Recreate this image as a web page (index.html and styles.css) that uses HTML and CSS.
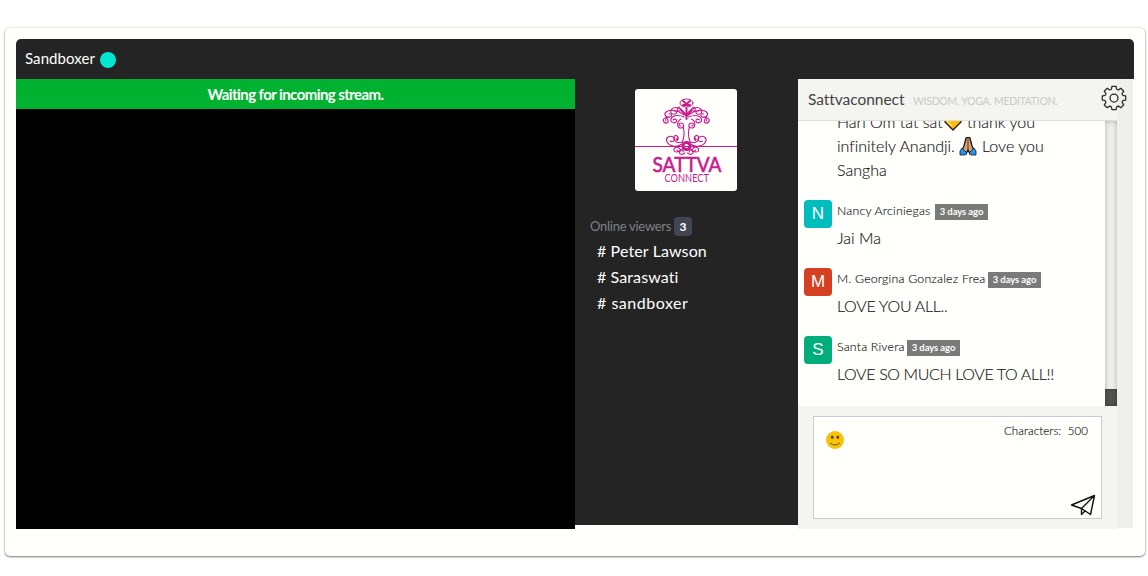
FILE: index.html
```html
<!DOCTYPE html>
<html lang="en">
<head>
<meta charset="utf-8">
<title>Sattva Connect</title>
<link rel="stylesheet" href="styles.css">
</head>
<body>
<main class="card">
  <header class="topbar"><span class="user">Sandboxer</span><i class="status"></i></header>
  <div class="columns">
    <section class="video"><div class="notice"><span>Waiting for incoming stream.</span></div></section>
    <aside class="viewers">
      <svg class="logo" viewBox="0 0 102 102">
        <rect width="102" height="102" rx="3" fill="#fffffc"/>
        <g fill="none" stroke="#c91b91" stroke-linecap="round">
          <path d="M0 57.500H102" stroke-width="1.200"/>
          <g id="half" stroke-width="1.100">
            <path d="M50 24C46 19 40 17 37 20S37 26 40 25S41 21 39 22"/>
            <path d="M49 26C43 21 34 20 31 23S32 29 35 28S36 24 34 25"/>
            <path d="M49 28C42 25 37 27 36 30S39 35 41 33S40 29 38 31"/>
            <path d="M34 28C29 28 27 31 29 33S34 34 33 31S30 30 31 32"/>
            <path d="M46 30C41 33 42 39 46 39S49 34 46 34S44 37 46 37"/>
            <path d="M45 18C42 18 41 22 44 22S47 19 45 20"/>
            <path d="M48 38C50 43 49 49 47 54"/>
            <path d="M47 55C42 59 34 57 32 53S34 46 38 48S38 54 35 52"/>
            <path d="M47 53C41 55 38 51 39 48S44 47 43 50S41 51 42 49"/>
            <path d="M48 59C44 64 39 64 39 61S43 57 45 60S42 63 42 61"/>
            <path d="M50 64C46 67 43 64 45 62S49 61 48 63"/>
          </g>
          <use href="#half" transform="translate(102.500) scale(-1 1)"/>
          <circle cx="51.500" cy="57" r="3.500" stroke-width="3" stroke-dasharray="1.500 .6"/>
          <path d="M51.500 19V30M47 22L51.500 27L56 22" stroke-width="2"/>
          <ellipse cx="51.500" cy="14" rx="6.500" ry="4" stroke-width="1"/>
          <path d="M48 12L51.500 15L55 12M48 16H55" stroke-width="2"/>
        </g>
        <g fill="#c91b91" class="logo-text">
          <text class="logo-big" x="17.500" y="83" font-size="20.500" textLength="69" lengthAdjust="spacingAndGlyphs">SATTVA</text>
          <text x="29.500" y="92.800" font-size="10.500" textLength="44.500" lengthAdjust="spacingAndGlyphs">CONNECT</text>
        </g>
      </svg>
      <div class="online"><span class="online-label">Online viewers</span><b class="count">3</b></div>
      <ul class="names">
        <li><span class="v1"># Peter Lawson</span></li>
        <li><span class="v2"># Saraswati</span></li>
        <li><span class="v3"># sandboxer</span></li>
      </ul>
    </aside>
    <section class="chat">
      <div class="chat-main">
        <header class="chat-head">
          <span class="room">Sattvaconnect</span><span class="tagline">WISDOM. YOGA. MEDITATION.</span>
          <svg class="gear" viewBox="-13 -13 26 26"><path d="M-2.600-8.900L-2-11.700H2L2.600-8.900Q3.500-8 4.450-8.130L6.860-9.690L9.690-6.860L8.130-4.450Q8-3.500 8.900-2.600L11.700-2V2L8.900 2.600Q8 3.500 8.130 4.450L9.690 6.860L6.860 9.690L4.450 8.130Q3.500 8 2.600 8.900L2 11.700H-2L-2.600 8.900Q-3.500 8-4.450 8.130L-6.860 9.690L-9.690 6.860L-8.130 4.450Q-8 3.500-8.900 2.600L-11.700 2V-2L-8.900-2.600Q-8-3.500-8.130-4.450L-9.690-6.860L-6.860-9.690L-4.450-8.130Q-3.500-8-2.600-8.900Z"/><circle r="4"/></svg>
        </header>
        <div class="scroller">
          <div class="messages">
            <div class="text first">
              <div><span class="t1">Hari Om tat sat</span><svg class="heart" viewBox="0 0 18 18"><path d="M9 17L1 9V5Q1 1 5 1Q8 1 9 4Q10 1 13 1Q17 1 17 5V9Z" fill="#ffb80c" stroke="#1c1a16" stroke-width="1.300"/><path d="M3 8L8 13" stroke="#ffdc64" stroke-width="1.500"/></svg><span class="t2">thank you</span></div>
              <div><span class="t3">infinitely Anandji.</span><svg class="hands" viewBox="0 0 18 19"><path d="M7 1Q9 0 11 1L13 9L15 13L11 17L9 13L7 17L3 13L5 9Z" fill="#dca071" stroke="#171515" stroke-width="1.300"/><path d="M9 2V14" stroke="#51372b"/><path d="M3 11L8 16L6 18H1V14ZM15 11L10 16L12 18H17V14Z" fill="#2196ef" stroke="#171515" stroke-width=".8"/></svg><span class="t4">Love you</span></div>
              <div><span class="t5">Sangha</span></div>
            </div>
            <article class="message"><i class="avatar teal">N</i><div><div class="meta"><span class="n1">Nancy Arciniegas</span><small><span>3 days ago</span></small></div><div class="text"><span class="m1">Jai Ma</span></div></div></article>
            <article class="message"><i class="avatar red">M</i><div><div class="meta"><span class="n2">M. Georgina Gonzalez Frea</span><small><span>3 days ago</span></small></div><div class="text"><span class="m2">LOVE YOU ALL..</span></div></div></article>
            <article class="message"><i class="avatar green">S</i><div><div class="meta"><span class="n3">Santa Rivera</span><small><span>3 days ago</span></small></div><div class="text"><span class="m3">LOVE SO MUCH LOVE TO ALL!!</span></div></div></article>
          </div>
          <div class="track"><div class="thumb"></div></div>
        </div>
        <footer class="composer"><div class="input">
          <svg class="smile" viewBox="0 0 18 18"><circle cx="9" cy="9" r="9" fill="#f9c203"/><ellipse cx="6.200" cy="6.200" rx="1.300" ry="1.700" fill="#4d4015"/><ellipse cx="11.800" cy="6.200" rx="1.300" ry="1.700" fill="#4d4015"/><path d="M4 12Q9 16 14 12" fill="none" stroke="#6b5410"/></svg>
          <div class="limit">Characters:&nbsp; 500</div>
          <svg class="send" viewBox="0 0 26 22"><path d="M1.500 11L24.500 1.500L20.500 20.500L11.500 14.500ZM1.500 11L11.500 14.500L24.500 1.500L11.500 14.500V20.500L15 17"/></svg>
        </div></footer>
      </div>
    </section>
  </div>
</main>
</body>
</html>
```
FILE: styles.css
```css
*{box-sizing:border-box}
body{margin:0;min-height:576px;padding:28px 3px 0 5px;background:#fff;font-family:Lato,"Open Sans",sans-serif;color:#303030;font-variant-ligatures:none}
.card{height:528px;padding:11px 11px 0;background:#fffffc;border-radius:5px;box-shadow:0 1px 2px rgba(0,0,0,.48),0 0 3px rgba(0,0,0,.16)}
.topbar{height:40px;background:#242424;border-radius:5px 5px 0 0;display:flex;align-items:center;padding-left:9px;color:#fff;font-size:15px}
.user{width:75px;white-space:nowrap;letter-spacing:.08px;padding-bottom:3px}
.status{width:16px;height:16px;border-radius:50%;background:#00e6d0;margin-top:2px}
.columns{display:grid;grid-template-columns:559px 223px 335px;align-items:start}
.video{height:450px;background:#000}
.notice{height:30px;background:#00b22f;color:#fff;display:flex;align-items:center;justify-content:center;font-size:15px;font-weight:700;letter-spacing:-.57px}
.viewers{height:446px;background:#242424;padding-top:10px}
.logo{display:block;width:102px;height:102px;margin-left:60px}
.logo-text{font-family:Lato,sans-serif}
.logo-big{stroke:#c91b91;stroke-width:.6}
.online{display:flex;height:19px;margin:26px 0 0 15px;font-size:13px;align-items:center;color:#7d8186}
.online-label{width:84px;white-space:nowrap;letter-spacing:-.26px;padding-bottom:2px}
.count{width:18px;height:19px;background:#3f4651;border-radius:4px;color:#fff;font-size:12px;text-align:center;line-height:19px}
.names{list-style:none;padding:0;margin:2px 0 0 22px;color:#fff;font-size:16px;line-height:26px}
.v1{letter-spacing:.12px}.v2{letter-spacing:.1px}.v3{letter-spacing:.52px}
.chat{height:449px;background:#efefec;padding-right:16px}
.chat-main{height:450px}
.chat-head{height:42px;background:#f4f4f1;border-bottom:1px solid #dcdedc;display:flex;align-items:center;padding-left:10px}
.room{width:105px;font-size:15.5px;letter-spacing:-.05px;white-space:nowrap;padding-bottom:1px;color:#444}
.tagline{width:188px;font-size:10.5px;letter-spacing:-.28px;color:#c9cac9;white-space:nowrap;padding-top:2px}
.gear{width:26px;height:26px;flex:none;margin-right:-12px;margin-top:-3px;fill:none;stroke:#282828;stroke-width:1.25}
.scroller{height:285px;display:grid;grid-template-columns:307px 12px;background:#fffffc}
.messages{height:285px;display:flex;flex-direction:column;justify-content:flex-end;overflow:hidden;padding:0 0 3px 6px}
.first{margin:0 0 17px 33px}
.first>div{display:flex;height:24px;align-items:center}
.text{font-size:16px;font-weight:300;line-height:24px;white-space:nowrap;color:#181818;-webkit-text-stroke:.15px #181818}
.m2{letter-spacing:-.3px}.m3{letter-spacing:-.36px}
.message{height:68px;flex:none;display:grid;grid-template-columns:28px 1fr;gap:5px}
.avatar{width:28px;height:28px;margin-top:1px;border-radius:4px;color:#fff;font-style:normal;font-size:17px;text-align:center;line-height:28px;font-family:"Liberation Sans",sans-serif}
.teal{background:#00bdbd}.red{background:#d54022}.green{background:#00ad7b}
.meta{height:22px;margin-bottom:5px;display:flex;align-items:center;font-size:12.3px;font-weight:300;white-space:nowrap;color:#181818}
.meta>span{letter-spacing:.2px;-webkit-text-stroke:.15px #181818}
.meta small{width:53px;height:16px;background:#7a7a79;color:#fff;font-size:9.5px;font-weight:700;line-height:16px;text-align:center;margin-top:4px;letter-spacing:-.1px}
.n1{width:98px}.n2{width:151px}.n3{width:70px}
.t1{width:107px}.t3{width:122px}
.heart{width:18px;height:18px;margin-right:5px}
.hands{width:18px;height:19px;margin-right:5px}
.track{background:#eeeeeb;box-shadow:inset 0 0 5px rgba(0,0,0,.28);display:flex;align-items:flex-end}
.thumb{width:12px;height:17px;background:#535351;box-shadow:inset 0 0 4px rgba(0,0,0,.35)}
.composer{height:123px;background:#f4f4f1;padding:10px 15px}
.input{width:289px;height:103px;border:1px solid #c9cad8;background:#fffffc;display:grid;grid-template-columns:20px 1fr;grid-template-rows:73px 26px;padding:0 5px 0 12px}
.smile{width:18px;height:18px;margin-top:14px}
.limit{font-size:11.5px;font-weight:300;color:#181818;-webkit-text-stroke:.15px #181818;text-align:right;padding:7px 8px 0 0;letter-spacing:.1px}
.send{grid-column:2;justify-self:end;width:26px;height:22px;margin-top:4px;fill:none;stroke:#111;stroke-width:1.4;stroke-linejoin:round}
```
